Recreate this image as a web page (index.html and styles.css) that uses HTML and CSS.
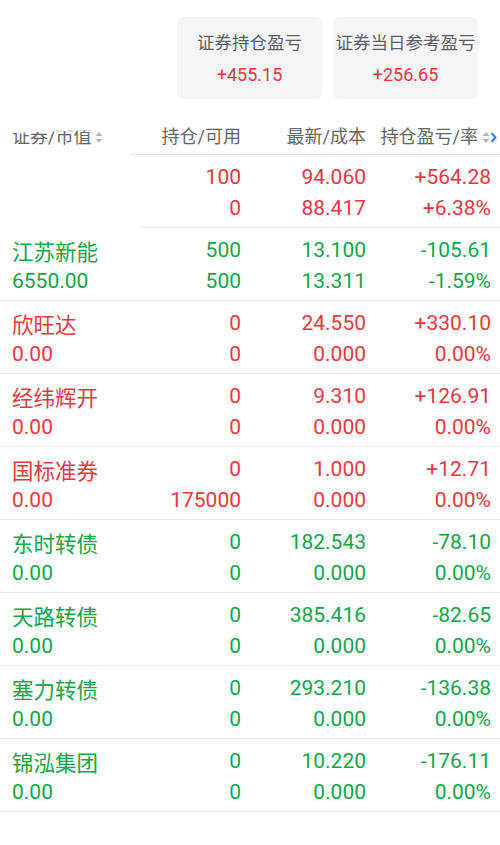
FILE: index.html
```
<!DOCTYPE html>
<html lang="zh-CN">
<head>
    <meta charset="UTF-8">
    <meta name="viewport" content="width=device-width, initial-scale=1.0">
    <title>持仓</title>
    <link rel="stylesheet" href="styles.css">
</head>
<body>
    <div class="summary">
        <div class="card">
            <div class="card-title">证券持仓盈亏</div>
            <div class="card-value up">+455.15</div>
        </div>
        <div class="card">
            <div class="card-title">证券当日参考盈亏</div>
            <div class="card-value up">+256.65</div>
        </div>
    </div>

    <div class="table">
        <div class="row head">
            <div class="cell name"><span class="clipped">证券/市值</span>
                <svg class="sort" width="8" height="13" viewBox="0 0 8 13"><path d="M4 1 L7.5 5 H0.5 Z M4 12 L7.5 8 H0.5 Z" fill="#b5b5b8"/></svg>
            </div>
            <div class="cell">持仓/可用</div>
            <div class="cell">最新/成本</div>
            <div class="cell last">持仓盈亏/率
                <svg class="sort" width="15" height="13" viewBox="0 0 15 13"><path d="M4 1 L7.5 5 H0.5 Z M4 12 L7.5 8 H0.5 Z" fill="#b5b5b8"/><path d="M9.5 2 L13.5 6.5 L9.5 11" fill="none" stroke="#2d7cf6" stroke-width="2"/></svg>
            </div>
        </div>

        <div class="row up cut">
            <div class="cell name"><span>&nbsp;</span><span>&nbsp;</span></div>
            <div class="cell"><span>100</span><span>0</span></div>
            <div class="cell"><span>94.060</span><span>88.417</span></div>
            <div class="cell"><span>+564.28</span><span>+6.38%</span></div>
        </div>
        <div class="row down">
            <div class="cell name"><span class="cn">江苏新能</span><span>6550.00</span></div>
            <div class="cell"><span>500</span><span>500</span></div>
            <div class="cell"><span>13.100</span><span>13.311</span></div>
            <div class="cell"><span>-105.61</span><span>-1.59%</span></div>
        </div>
        <div class="row up">
            <div class="cell name"><span class="cn">欣旺达</span><span>0.00</span></div>
            <div class="cell"><span>0</span><span>0</span></div>
            <div class="cell"><span>24.550</span><span>0.000</span></div>
            <div class="cell"><span>+330.10</span><span>0.00%</span></div>
        </div>
        <div class="row up">
            <div class="cell name"><span class="cn">经纬辉开</span><span>0.00</span></div>
            <div class="cell"><span>0</span><span>0</span></div>
            <div class="cell"><span>9.310</span><span>0.000</span></div>
            <div class="cell"><span>+126.91</span><span>0.00%</span></div>
        </div>
        <div class="row up">
            <div class="cell name"><span class="cn">国标准券</span><span>0.00</span></div>
            <div class="cell"><span>0</span><span>175000</span></div>
            <div class="cell"><span>1.000</span><span>0.000</span></div>
            <div class="cell"><span>+12.71</span><span>0.00%</span></div>
        </div>
        <div class="row down">
            <div class="cell name"><span class="cn">东时转债</span><span>0.00</span></div>
            <div class="cell"><span>0</span><span>0</span></div>
            <div class="cell"><span>182.543</span><span>0.000</span></div>
            <div class="cell"><span>-78.10</span><span>0.00%</span></div>
        </div>
        <div class="row down">
            <div class="cell name"><span class="cn">天路转债</span><span>0.00</span></div>
            <div class="cell"><span>0</span><span>0</span></div>
            <div class="cell"><span>385.416</span><span>0.000</span></div>
            <div class="cell"><span>-82.65</span><span>0.00%</span></div>
        </div>
        <div class="row down">
            <div class="cell name"><span class="cn">塞力转债</span><span>0.00</span></div>
            <div class="cell"><span>0</span><span>0</span></div>
            <div class="cell"><span>293.210</span><span>0.000</span></div>
            <div class="cell"><span>-136.38</span><span>0.00%</span></div>
        </div>
        <div class="row down">
            <div class="cell name"><span class="cn">锦泓集团</span><span>0.00</span></div>
            <div class="cell"><span>0</span><span>0</span></div>
            <div class="cell"><span>10.220</span><span>0.000</span></div>
            <div class="cell"><span>-176.11</span><span>0.00%</span></div>
        </div>
    </div>
</body>
</html>
```

FILE: styles.css
```
body {
    margin: 0;
    background: #fff;
    font-family: Roboto, "Noto Sans CJK SC", sans-serif;
    color: #333;
}

.up {
    color: #e8383d;
}

.down {
    color: #0fa74a;
}

/* summary cards */
.summary {
    display: flex;
    justify-content: flex-end;
    gap: 11px;
    padding: 17px 22px 0 0;
}

.card {
    width: 145px;
    height: 82px;
    box-sizing: border-box;
    padding-top: 14px;
    background: #f5f5f7;
    border-radius: 6px;
    text-align: center;
}

.card-title {
    font-size: 17.5px;
    line-height: 24px;
    color: #5c5e66;
    white-space: nowrap;
}

.card-value {
    margin-top: 8px;
    font-size: 18px;
    line-height: 24px;
}

/* positions table */
.row {
    display: grid;
    grid-template-columns: 104px 125px 125px 125px;
    padding: 7px 9px 3px 12px;
    border-bottom: 1px solid #e9e9eb;
}

.row.cut {
    border-bottom: none;
    padding-bottom: 4px;
    background: linear-gradient(#e9e9eb, #e9e9eb) no-repeat 140px 100% / 100% 1px;
}

.row.head {
    padding-top: 25px;
    padding-bottom: 5px;
    border-bottom: none;
    background: linear-gradient(#e6e6e8, #e6e6e8) no-repeat 130px 100% / 100% 1px;
    font-size: 18px;
    line-height: 26px;
    color: #666;
}

.cell {
    display: flex;
    flex-direction: column;
    align-items: flex-end;
    font-size: 21px;
    line-height: 31px;
    white-space: nowrap;
}

.head .cell {
    flex-direction: row;
    justify-content: flex-end;
    align-items: center;
    font-size: 18px;
    line-height: 26px;
}

.cell.name {
    align-items: flex-start;
}

.head .cell.name {
    justify-content: flex-start;
    align-items: center;
}

.head .cell.last {
    margin-right: -6px;
}

.clipped {
    display: inline-block;
    clip-path: polygon(0 9px, 100% 6px, 100% 100%, 0 100%);
}

.sort {
    margin-left: 4px;
}

.cn {
    font-family: "Noto Sans CJK SC", sans-serif;
    font-size: 21.5px;
}
```
